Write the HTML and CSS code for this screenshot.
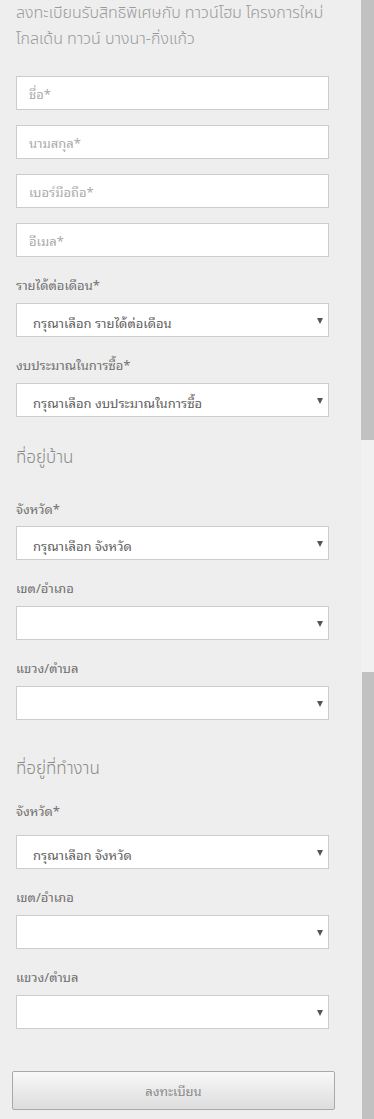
FILE: index.html
```html
<!DOCTYPE html>
<html lang="th">
<head>
<meta charset="utf-8">
<title>ลงทะเบียน</title>
<link rel="stylesheet" href="styles.css">
</head>
<body>
<div class="page">
  <main class="main">
    <h1 class="title">ลงทะเบียนรับสิทธิพิเศษกับ ทาวน์โฮม โครงการใหม่ โกลเด้น ทาวน์ บางนา-กิ่งแก้ว</h1>
    <form class="form">
      <input class="text-input first" type="text" placeholder="ชื่อ*">
      <input class="text-input" type="text" placeholder="นามสกุล*">
      <input class="text-input" type="text" placeholder="เบอร์มือถือ*">
      <input class="text-input" type="text" placeholder="อีเมล*">

      <label class="label">รายได้ต่อเดือน*</label>
      <div class="select-wrap"><select class="select"><option>กรุณาเลือก รายได้ต่อเดือน</option></select></div>
      <label class="label">งบประมาณในการซื้อ*</label>
      <div class="select-wrap"><select class="select"><option>กรุณาเลือก งบประมาณในการซื้อ</option></select></div>

      <h2 class="section">ที่อยู่บ้าน</h2>
      <label class="label after-section">จังหวัด*</label>
      <div class="select-wrap"><select class="select"><option>กรุณาเลือก จังหวัด</option></select></div>
      <label class="label">เขต/อำเภอ</label>
      <div class="select-wrap"><select class="select"><option></option></select></div>
      <label class="label">แขวง/ตำบล</label>
      <div class="select-wrap"><select class="select"><option></option></select></div>

      <h2 class="section work">ที่อยู่ที่ทำงาน</h2>
      <label class="label after-section work">จังหวัด*</label>
      <div class="select-wrap"><select class="select"><option>กรุณาเลือก จังหวัด</option></select></div>
      <label class="label">เขต/อำเภอ</label>
      <div class="select-wrap"><select class="select"><option></option></select></div>
      <label class="label">แขวง/ตำบล</label>
      <div class="select-wrap"><select class="select"><option></option></select></div>

      <button class="submit" type="button">ลงทะเบียน</button>
    </form>
  </main>
  <aside class="track">
    <div class="thumb top"></div>
    <div class="gap"></div>
    <div class="thumb bottom"></div>
  </aside>
</div>
</body>
</html>
```

FILE: styles.css
```css
html, body {
  margin: 0;
  padding: 0;
  height: 1119px;
  overflow: hidden;
  background: #eeeeee;
}

.page {
  display: flex;
  height: 1119px;
  font-family: "Noto Sans Thai Looped", "Loma", "Garuda", "Tahoma", "Noto Sans Thai", "Noto Sans", sans-serif;
}

.main {
  width: 361px;
  box-sizing: border-box;
  padding: 0 32px 0 16px;
}

.title {
  margin: 0 -12px 0 0;
  font-family: "Noto Sans Thai", "Noto Sans Thai UI", "Noto Sans", sans-serif;
  font-size: 16px;
  line-height: 26px;
  font-weight: 300;
  color: #9a9a9a;
}

.form {
  display: flex;
  flex-direction: column;
}

.text-input {
  display: block;
  height: 34px;
  box-sizing: border-box;
  margin: 15px 0 0;
  padding: 0 12px;
  border: 1px solid #cccccc;
  background: #ffffff;
  font-family: inherit;
  font-size: 13px;
  color: #555;
  outline: none;
}
.text-input.first { margin-top: 24px; }
.text-input::placeholder { color: #aaaaaa; }

.label {
  display: block;
  margin-top: 18px;
  margin-bottom: 8px;
  font-size: 13px;
  line-height: 20px;
  color: #707070;
}
.label.after-section { margin-top: 28px; margin-bottom: 7px; }
.label.after-section.work { margin-top: 19px; margin-bottom: 14px; }

.select-wrap {
  position: relative;
  height: 34px;
}
.select-wrap::after {
  content: "";
  position: absolute;
  right: 6px;
  top: 15px;
  border-left: 3.5px solid transparent;
  border-right: 3.5px solid transparent;
  border-top: 6px solid #555555;
}

.select {
  -webkit-appearance: none;
  appearance: none;
  display: block;
  width: 100%;
  height: 34px;
  box-sizing: border-box;
  margin: 0;
  padding: 4px 24px 0 16px;
  border: 1px solid #cccccc;
  border-radius: 0;
  background: #ffffff;
  font-family: inherit;
  font-size: 13px;
  color: #606060;
  outline: none;
}

.section {
  margin: 28px 0 0;
  font-family: "Noto Sans Thai", "Noto Sans Thai UI", "Noto Sans", sans-serif;
  font-size: 17px;
  line-height: 26px;
  font-weight: 300;
  color: #8a8a8a;
}
.section.work { margin-top: 36px; }

.submit {
  margin: 42px -6px 0 -4px;
  height: 39px;
  border: 1px solid #a9a9a9;
  border-radius: 2px;
  background: linear-gradient(#f8f8f8, #dddddd);
  font-family: inherit;
  font-size: 13px;
  color: #8a8a8a;
}

.track {
  width: 13px;
  display: flex;
  flex-direction: column;
}
.thumb { background: #c1c1c1; }
.thumb.top { height: 440px; }
.gap { height: 232px; background: #f1f1f1; }
.thumb.bottom { flex: 1; margin-left: 1px; }
```
